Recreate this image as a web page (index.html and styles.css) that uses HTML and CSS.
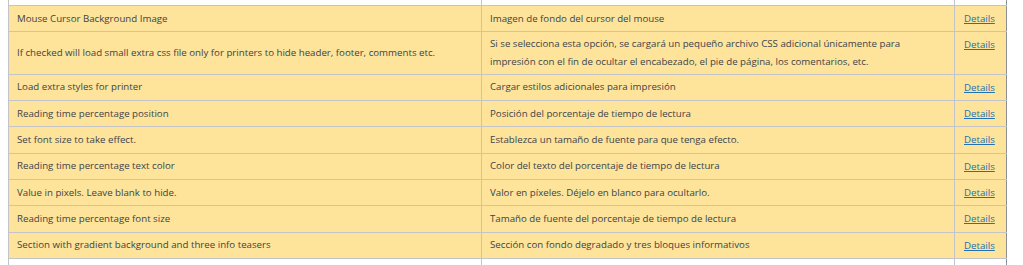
FILE: index.html
```html
<!DOCTYPE html>
<html>
<head>
<meta charset="utf-8">
<link rel="stylesheet" href="styles.css">
</head>
<body>
<table class="strings">
  <colgroup>
    <col class="c-orig">
    <col class="c-trans">
    <col class="c-link">
  </colgroup>
  <tbody>
    <tr class="prev"><td></td><td></td><td></td></tr>
    <tr><td>Mouse Cursor Background Image</td><td>Imagen de fondo del cursor del mouse</td><td><a href="#">Details</a></td></tr>
    <tr><td>If checked will load small extra css file only for printers to hide header, footer, comments etc.</td><td>Si se selecciona esta opción, se cargará un pequeño archivo CSS adicional únicamente para impresión con el fin de ocultar el encabezado, el pie de página, los comentarios, etc.</td><td><a href="#">Details</a></td></tr>
    <tr><td>Load extra styles for printer</td><td>Cargar estilos adicionales para impresión</td><td><a href="#">Details</a></td></tr>
    <tr><td>Reading time percentage position</td><td>Posición del porcentaje de tiempo de lectura</td><td><a href="#">Details</a></td></tr>
    <tr><td>Set font size to take effect.</td><td>Establezca un tamaño de fuente para que tenga efecto.</td><td><a href="#">Details</a></td></tr>
    <tr><td>Reading time percentage text color</td><td>Color del texto del porcentaje de tiempo de lectura</td><td><a href="#">Details</a></td></tr>
    <tr><td>Value in pixels. Leave blank to hide.</td><td>Valor en píxeles. Déjelo en blanco para ocultarlo.</td><td><a href="#">Details</a></td></tr>
    <tr><td>Reading time percentage font size</td><td>Tamaño de fuente del porcentaje de tiempo de lectura</td><td><a href="#">Details</a></td></tr>
    <tr><td>Section with gradient background and three info teasers</td><td>Sección con fondo degradado y tres bloques informativos</td><td><a href="#">Details</a></td></tr>
    <tr class="next"><td></td><td></td><td></td></tr>
  </tbody>
</table>
</body>
</html>
```
FILE: styles.css
```css
html, body {
  margin: 0;
  padding: 0;
  background: #fff;
  overflow: hidden;
}
body {
  padding-left: 8px;
  font-family: "Open Sans", "Noto Sans", sans-serif;
  font-size: 9.7px;
  color: #3c434a;
}
.strings {
  border-collapse: collapse;
  table-layout: fixed;
  width: 998px;
  border-left: 1px solid #c3c4c7;
  border-right: 1px solid #8c8f94;
}
.c-orig { width: 473px; }
.c-trans { width: 473px; }
.c-link { width: 52px; }
.strings td {
  border-top: 1px solid #c3c4c7;
  border-bottom: 1px solid #c3c4c7;
  border-left: 1px solid #c3c4c7;
  background: #fee39b;
  padding: 2.75px 8px;
  line-height: 18px;
  vertical-align: middle;
  overflow: hidden;
}
.strings td:nth-child(3) {
  padding: 4px 0 4px 9px;
  line-height: 17.3px;
  white-space: nowrap;
  vertical-align: top;
}
.strings tr.prev td {
  background: #fff;
  height: 5px;
  padding: 0;
  border-top: none;
}
.strings tr.next td {
  background: #fff;
  height: 20px;
  padding: 0;
}
.strings a {
  color: #2271b1;
  text-decoration: underline;
}
```
